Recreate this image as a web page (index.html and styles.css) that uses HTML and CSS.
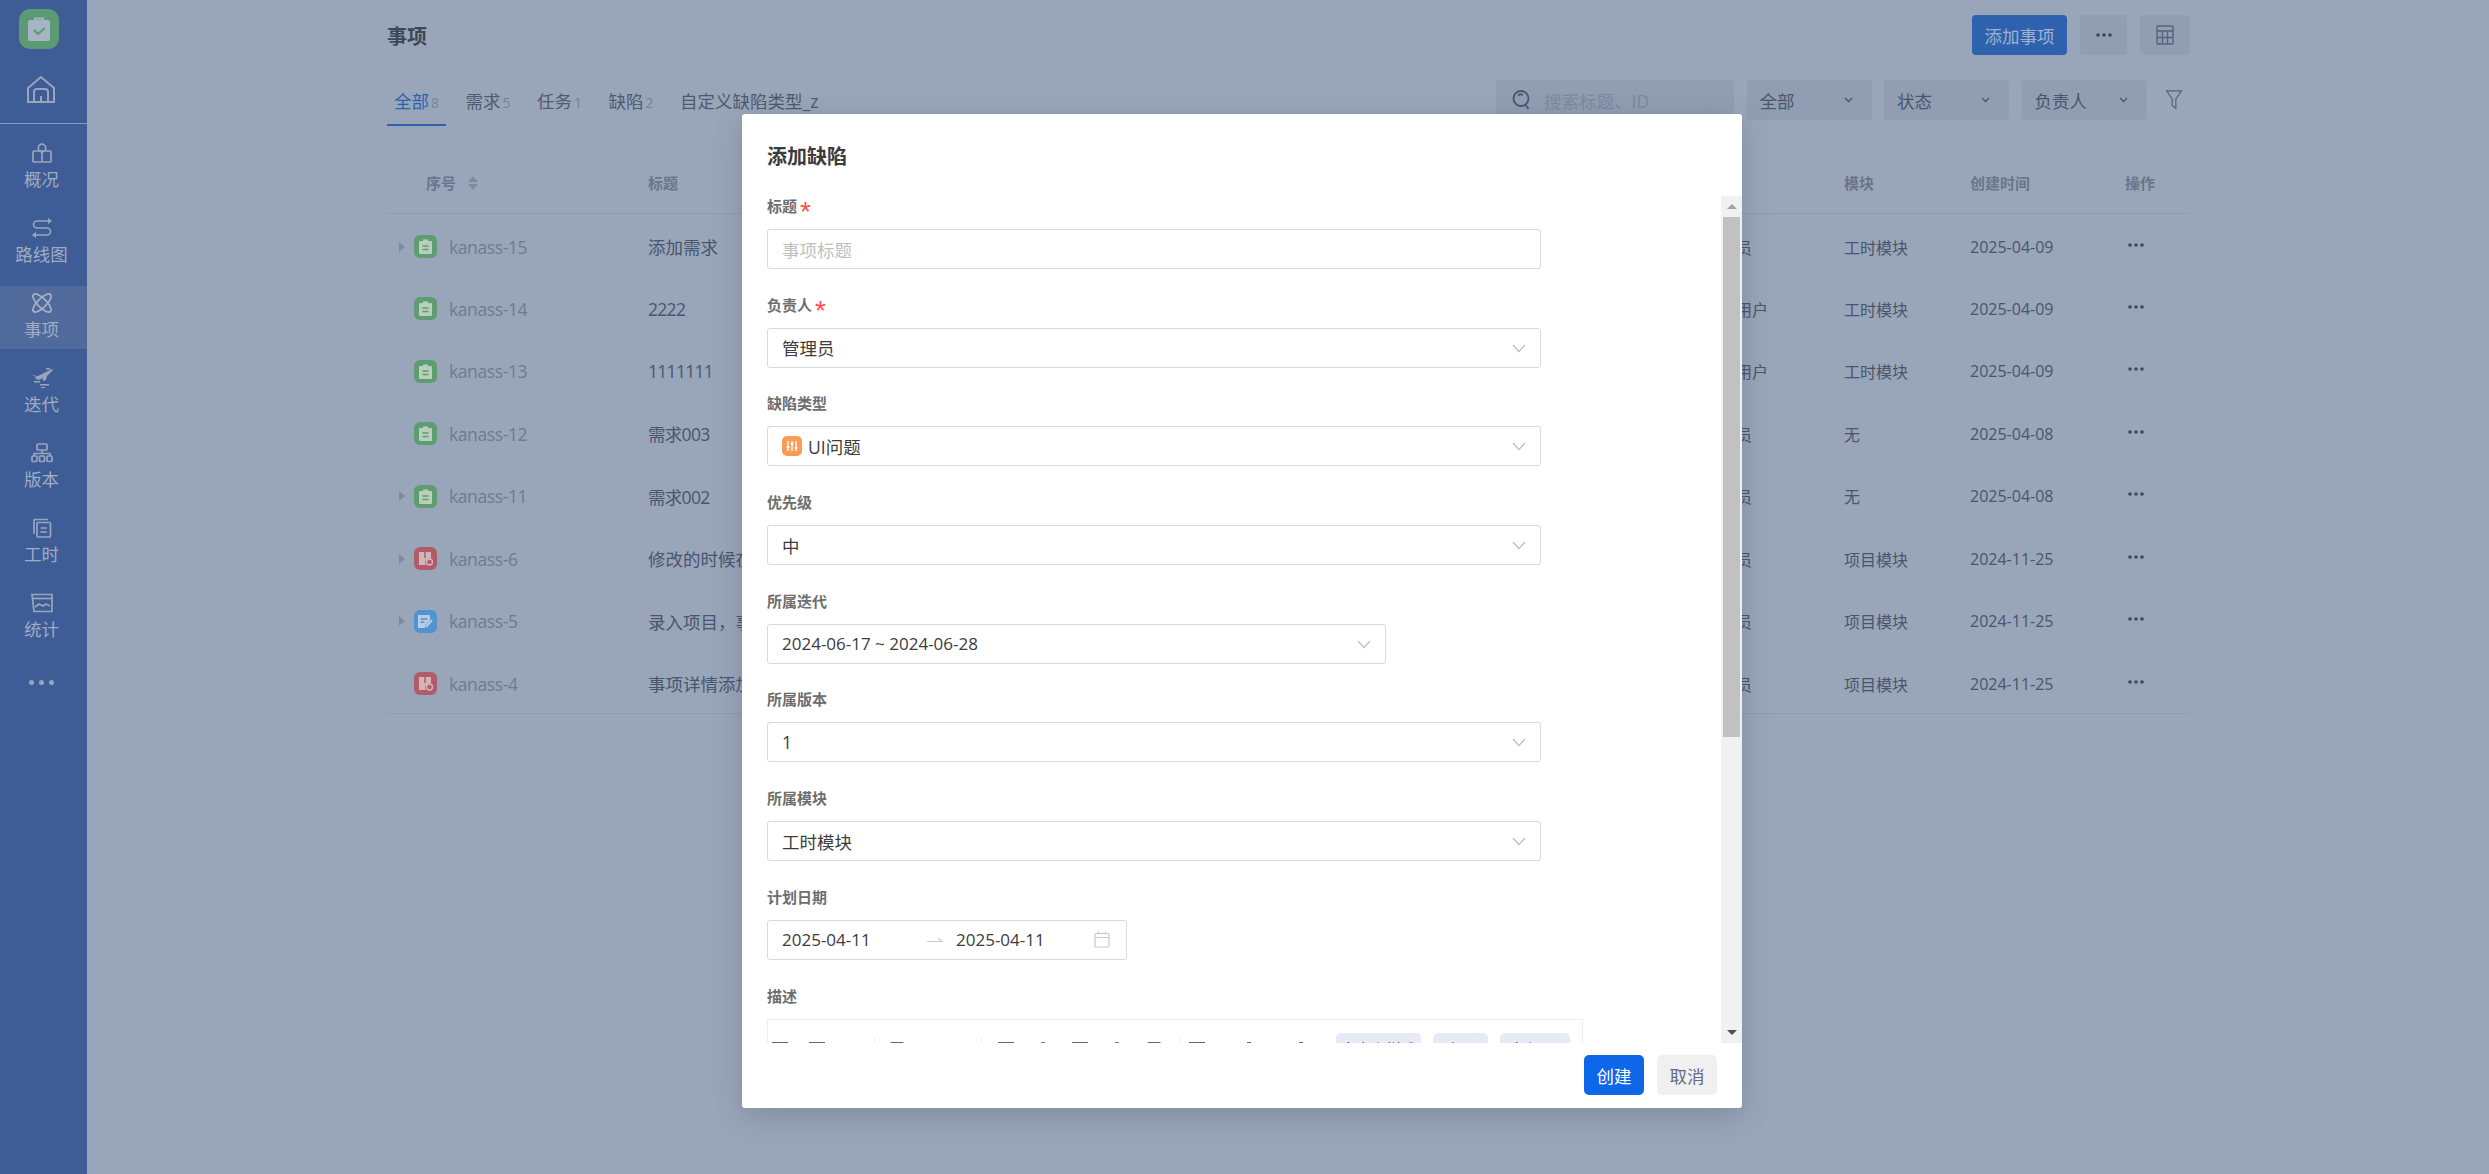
FILE: index.html
```html
<!DOCTYPE html>
<html lang="zh-CN">
<head>
    <title>事项</title>
    <meta charset="utf-8">
    <link rel="stylesheet" href="styles.css">
</head>
<body>
    <div class="app">
        <aside class="sidebar">
            <div class="side-head">
                <div class="logo">
                    <svg width="24" height="26" viewBox="0 0 24 26"><rect x="1" y="4" width="22" height="21" rx="2" fill="#a6b4c4"/><path d="M8 5V2.500h8V5" fill="none" stroke="#a6b4c4" stroke-width="2"/><path d="M7 14l4 4 7-6" fill="none" stroke="#5b9a72" stroke-width="2.200"/></svg>
                </div>
                <svg class="home" width="28" height="29" viewBox="0 0 28 29" fill="none" stroke="#98a6bd" stroke-width="2"><path d="M1 13L14 2l13 11v14H1z"/><path d="M7 27V17a3 3 0 0 1 3-3h8a3 3 0 0 1 3 3v10"/><path d="M14 21v6"/></svg>
            </div>
            <nav class="nav">
                <a class="nav-item">
                    <svg width="20" height="20" viewBox="0 0 20 20" fill="none" stroke="#98a6bd" stroke-width="1.700"><circle cx="10" cy="5" r="3.800"/><rect x="1" y="8" width="18" height="11" rx="1"/><path d="M10 8v11"/></svg>
                    <span>概况</span>
                </a>
                <a class="nav-item">
                    <svg width="22" height="20" viewBox="0 0 22 20" fill="none" stroke="#98a6bd" stroke-width="1.700"><path d="M20 3H6a3.500 3.500 0 0 0 0 7h10a3.500 3.500 0 0 1 0 7H2"/><path d="M17 .5L20.500 3 17 5.500M5 14.500L1.500 17 5 19.500" fill="#98a6bd" stroke-width="1"/></svg>
                    <span>路线图</span>
                </a>
                <a class="nav-item active">
                    <svg width="20" height="20" viewBox="0 0 20 20" fill="none" stroke="#a3b0c4" stroke-width="1.800"><ellipse cx="10" cy="10" rx="12" ry="4.500" transform="rotate(45 10 10)"/><ellipse cx="10" cy="10" rx="12" ry="4.500" transform="rotate(-45 10 10)"/></svg>
                    <span>事项</span>
                </a>
                <a class="nav-item">
                    <svg width="22" height="20" viewBox="0 0 22 20" fill="#98a6bd"><path d="M0 7l7 1 8-4 6-3c1 0 1 1 0 2l-5 5-1 4-3 1 0-3-4 2-5-2 3-1z"/><path d="M15 0h4v1.500h-4zM3 13h6v1.500H3zM9 16h9v1.500H9zM10 19h4v1h-4z"/></svg>
                    <span>迭代</span>
                </a>
                <a class="nav-item">
                    <svg width="22" height="20" viewBox="0 0 22 20" fill="none" stroke="#98a6bd" stroke-width="1.700"><rect x="6" y="1" width="10" height="6" rx="1"/><path d="M11 7v3M3 13v-2.500h16V13"/><rect x="1" y="13" width="5" height="5.500" rx="1"/><rect x="8.500" y="13" width="5" height="5.500" rx="1"/><rect x="16" y="13" width="5" height="5.500" rx="1"/></svg>
                    <span>版本</span>
                </a>
                <a class="nav-item">
                    <svg width="20" height="20" viewBox="0 0 20 20" fill="none" stroke="#98a6bd" stroke-width="1.700"><path d="M2 16V2.500a1 1 0 0 1 1-1h13"/><rect x="5" y="4.500" width="13.500" height="14.500" rx="1"/><path d="M8.500 10h6.500M8.500 14h6.500"/></svg>
                    <span>工时</span>
                </a>
                <a class="nav-item">
                    <svg width="22" height="20" viewBox="0 0 22 20" fill="none" stroke="#98a6bd" stroke-width="1.700"><path d="M1 1.500h20v17H3z"/><path d="M2 5.500h19"/><path d="M4 14l4-3 4 2 3-2 4 2"/></svg>
                    <span>统计</span>
                </a>
            </nav>
            <div class="side-more"><i></i><i></i><i></i></div>
        </aside>

        <main class="page">
            <div class="top">
                <h1>事项</h1>
                <div class="top-btns">
                    <button class="btn-add">添加事项</button>
                    <button class="btn-more"><svg width="16" height="4" viewBox="0 0 16 4"><circle cx="2" cy="2" r="1.800"/><circle cx="8" cy="2" r="1.800"/><circle cx="14" cy="2" r="1.800"/></svg></button>
                    <button class="btn-view"><svg width="18" height="20" viewBox="0 0 18 20" fill="none" stroke="#56637f" stroke-width="1.400"><rect x="1" y="1" width="16" height="18" rx="1"/><path d="M1 6h16M1 12.500h16M6.500 6v13M11.500 6v13"/></svg></button>
                </div>
            </div>

            <div class="bar">
                <div class="tabs">
                    <div class="tab active">全部<em>8</em></div>
                    <div class="tab">需求<em>5</em></div>
                    <div class="tab">任务<em>1</em></div>
                    <div class="tab">缺陷<em>2</em></div>
                    <div class="tab">自定义缺陷类型_z</div>
                </div>
                <div class="filters">
                    <div class="search">
                        <svg width="20" height="22" viewBox="0 0 20 22" fill="none" stroke="#48556d" stroke-width="1.800"><circle cx="10" cy="9.500" r="7.500"/><path d="M14.500 16l3 4M7 6.500c1-1 3-1.500 5-.5"/></svg>
                        <span>搜索标题、ID</span>
                    </div>
                    <div class="filter">全部<svg class="chev" width="9" height="6" viewBox="0 0 9 6"><path d="M1 1l3.500 3.500L8 1"/></svg></div>
                    <div class="filter">状态<svg class="chev" width="9" height="6" viewBox="0 0 9 6"><path d="M1 1l3.500 3.500L8 1"/></svg></div>
                    <div class="filter">负责人<svg class="chev" width="9" height="6" viewBox="0 0 9 6"><path d="M1 1l3.500 3.500L8 1"/></svg></div>
                    <svg class="funnel" width="18" height="22" viewBox="0 0 18 24" fill="none" stroke="#56637a" stroke-width="1.300"><path d="M1 2h16l-6 9v10l-4-3v-7z"/></svg>
                </div>
            </div>

            <table class="list">
                <colgroup>
                    <col class="c-id"><col class="c-title"><col class="c-user"><col class="c-mod"><col class="c-date"><col class="c-op">
                </colgroup>
                <thead>
                    <tr>
                        <th><div class="th-id">序号<span class="sorter"><i></i><i></i></span></div></th>
                        <th>标题</th>
                        <th><span class="th-user">负责人</span></th>
                        <th>模块</th>
                        <th>创建时间</th>
                        <th>操作</th>
                    </tr>
                </thead>
                <tbody>
                    <tr>
                        <td><div class="cell-id"><span class="expand"></span><span class="ico green"><svg width="13" height="15" viewBox="0 0 13 15"><path d="M1 2h3V.5h5V2h3a1 1 0 0 1 1 1v11a1 1 0 0 1-1 1H1a1 1 0 0 1-1-1V3a1 1 0 0 1 1-1z" fill="#b9cfbb"/><path d="M3.500 7h6M3.500 10.500h6" stroke="#5e9c71" stroke-width="1.500"/></svg></span>kanass-15</div></td>
                        <td class="name">添加需求</td><td>管理员</td><td>工时模块</td><td>2025-04-09</td>
                        <td><svg class="dots" width="16" height="4" viewBox="0 0 16 4"><circle cx="2" cy="2" r="1.800"/><circle cx="8" cy="2" r="1.800"/><circle cx="14" cy="2" r="1.800"/></svg></td>
                    </tr>
                    <tr>
                        <td><div class="cell-id"><span class="no-expand"></span><span class="ico green"><svg width="13" height="15" viewBox="0 0 13 15"><path d="M1 2h3V.5h5V2h3a1 1 0 0 1 1 1v11a1 1 0 0 1-1 1H1a1 1 0 0 1-1-1V3a1 1 0 0 1 1-1z" fill="#b9cfbb"/><path d="M3.500 7h6M3.500 10.500h6" stroke="#5e9c71" stroke-width="1.500"/></svg></span>kanass-14</div></td>
                        <td class="name tight">2222</td><td>普通用户</td><td>工时模块</td><td>2025-04-09</td>
                        <td><svg class="dots" width="16" height="4" viewBox="0 0 16 4"><circle cx="2" cy="2" r="1.800"/><circle cx="8" cy="2" r="1.800"/><circle cx="14" cy="2" r="1.800"/></svg></td>
                    </tr>
                    <tr>
                        <td><div class="cell-id"><span class="no-expand"></span><span class="ico green"><svg width="13" height="15" viewBox="0 0 13 15"><path d="M1 2h3V.5h5V2h3a1 1 0 0 1 1 1v11a1 1 0 0 1-1 1H1a1 1 0 0 1-1-1V3a1 1 0 0 1 1-1z" fill="#b9cfbb"/><path d="M3.500 7h6M3.500 10.500h6" stroke="#5e9c71" stroke-width="1.500"/></svg></span>kanass-13</div></td>
                        <td class="name tight">1111111</td><td>普通用户</td><td>工时模块</td><td>2025-04-09</td>
                        <td><svg class="dots" width="16" height="4" viewBox="0 0 16 4"><circle cx="2" cy="2" r="1.800"/><circle cx="8" cy="2" r="1.800"/><circle cx="14" cy="2" r="1.800"/></svg></td>
                    </tr>
                    <tr>
                        <td><div class="cell-id"><span class="no-expand"></span><span class="ico green"><svg width="13" height="15" viewBox="0 0 13 15"><path d="M1 2h3V.5h5V2h3a1 1 0 0 1 1 1v11a1 1 0 0 1-1 1H1a1 1 0 0 1-1-1V3a1 1 0 0 1 1-1z" fill="#b9cfbb"/><path d="M3.500 7h6M3.500 10.500h6" stroke="#5e9c71" stroke-width="1.500"/></svg></span>kanass-12</div></td>
                        <td class="name tight">需求003</td><td>管理员</td><td>无</td><td>2025-04-08</td>
                        <td><svg class="dots" width="16" height="4" viewBox="0 0 16 4"><circle cx="2" cy="2" r="1.800"/><circle cx="8" cy="2" r="1.800"/><circle cx="14" cy="2" r="1.800"/></svg></td>
                    </tr>
                    <tr>
                        <td><div class="cell-id"><span class="expand"></span><span class="ico green"><svg width="13" height="15" viewBox="0 0 13 15"><path d="M1 2h3V.5h5V2h3a1 1 0 0 1 1 1v11a1 1 0 0 1-1 1H1a1 1 0 0 1-1-1V3a1 1 0 0 1 1-1z" fill="#b9cfbb"/><path d="M3.500 7h6M3.500 10.500h6" stroke="#5e9c71" stroke-width="1.500"/></svg></span>kanass-11</div></td>
                        <td class="name tight">需求002</td><td>管理员</td><td>无</td><td>2025-04-08</td>
                        <td><svg class="dots" width="16" height="4" viewBox="0 0 16 4"><circle cx="2" cy="2" r="1.800"/><circle cx="8" cy="2" r="1.800"/><circle cx="14" cy="2" r="1.800"/></svg></td>
                    </tr>
                    <tr>
                        <td><div class="cell-id"><span class="expand"></span><span class="ico red"><svg width="14" height="15" viewBox="0 0 14 15"><path d="M0 1h12v7a4 4 0 0 0-5 6H0z" fill="#d4b4bb"/><path d="M6 1v6" stroke="#b05c68" stroke-width="1.500"/><circle cx="10.500" cy="11" r="3" fill="none" stroke="#d4b4bb" stroke-width="1.500"/></svg></span>kanass-6</div></td>
                        <td class="name">修改的时候在</td><td>管理员</td><td>项目模块</td><td>2024-11-25</td>
                        <td><svg class="dots" width="16" height="4" viewBox="0 0 16 4"><circle cx="2" cy="2" r="1.800"/><circle cx="8" cy="2" r="1.800"/><circle cx="14" cy="2" r="1.800"/></svg></td>
                    </tr>
                    <tr>
                        <td><div class="cell-id"><span class="expand"></span><span class="ico blue"><svg width="15" height="15" viewBox="0 0 15 15"><path d="M0 1h12v5l-5 6v2H0z" fill="#b6cde4"/><path d="M2.500 5h7M2.500 8h4" stroke="#4f93cf" stroke-width="1.300"/><path d="M8 13l6-7" stroke="#b6cde4" stroke-width="2"/></svg></span>kanass-5</div></td>
                        <td class="name">录入项目，事</td><td>管理员</td><td>项目模块</td><td>2024-11-25</td>
                        <td><svg class="dots" width="16" height="4" viewBox="0 0 16 4"><circle cx="2" cy="2" r="1.800"/><circle cx="8" cy="2" r="1.800"/><circle cx="14" cy="2" r="1.800"/></svg></td>
                    </tr>
                    <tr>
                        <td><div class="cell-id"><span class="no-expand"></span><span class="ico red"><svg width="14" height="15" viewBox="0 0 14 15"><path d="M0 1h12v7a4 4 0 0 0-5 6H0z" fill="#d4b4bb"/><path d="M6 1v6" stroke="#b05c68" stroke-width="1.500"/><circle cx="10.500" cy="11" r="3" fill="none" stroke="#d4b4bb" stroke-width="1.500"/></svg></span>kanass-4</div></td>
                        <td class="name">事项详情添加</td><td>管理员</td><td>项目模块</td><td>2024-11-25</td>
                        <td><svg class="dots" width="16" height="4" viewBox="0 0 16 4"><circle cx="2" cy="2" r="1.800"/><circle cx="8" cy="2" r="1.800"/><circle cx="14" cy="2" r="1.800"/></svg></td>
                    </tr>
                </tbody>
            </table>
        </main>
    </div>

    <div class="modal">
        <div class="modal-head">添加缺陷</div>
        <div class="modal-body">
            <div class="form">
                <div class="field">
                    <label>标题<b>*</b></label>
                    <div class="input placeholder">事项标题</div>
                </div>
                <div class="field">
                    <label>负责人<b>*</b></label>
                    <div class="input">管理员<svg class="arrow" width="14" height="9" viewBox="0 0 14 9"><path d="M1 1l6 6.500L13 1"/></svg></div>
                </div>
                <div class="field">
                    <label>缺陷类型</label>
                    <div class="input">
                        <span class="type-ico"><svg width="12" height="12" viewBox="0 0 12 12" stroke="#fff" stroke-width="1.400"><path d="M2 1v10M6 1v10M10 1v10"/><path d="M.5 7h3M4.500 4h3M8.500 8h3" stroke-width="1.600"/></svg></span>UI问题
                        <svg class="arrow" width="14" height="9" viewBox="0 0 14 9"><path d="M1 1l6 6.500L13 1"/></svg>
                    </div>
                </div>
                <div class="field">
                    <label>优先级</label>
                    <div class="input">中<svg class="arrow" width="14" height="9" viewBox="0 0 14 9"><path d="M1 1l6 6.500L13 1"/></svg></div>
                </div>
                <div class="field">
                    <label>所属迭代</label>
                    <div class="input mid date-text">2024-06-17 ~ 2024-06-28<svg class="arrow" width="14" height="9" viewBox="0 0 14 9"><path d="M1 1l6 6.500L13 1"/></svg></div>
                </div>
                <div class="field">
                    <label>所属版本</label>
                    <div class="input">1<svg class="arrow" width="14" height="9" viewBox="0 0 14 9"><path d="M1 1l6 6.500L13 1"/></svg></div>
                </div>
                <div class="field">
                    <label>所属模块</label>
                    <div class="input">工时模块<svg class="arrow" width="14" height="9" viewBox="0 0 14 9"><path d="M1 1l6 6.500L13 1"/></svg></div>
                </div>
                <div class="field">
                    <label>计划日期</label>
                    <div class="input range date-text">
                        <span class="range-from">2025-04-11</span>
                        <svg class="range-sep" width="16" height="7" viewBox="0 0 16 7" fill="none" stroke="#ccc" stroke-width="1.200"><path d="M0 5.500h15L11 2"/></svg>
                        <span class="range-to">2025-04-11</span>
                        <svg class="calendar" width="16" height="17" viewBox="0 0 16 17" fill="none" stroke="#c8c8c8" stroke-width="1.200"><rect x="1" y="2.500" width="14" height="13.500" rx="1"/><path d="M1 6.500h14M4.500 .5v3M11.500 .5v3"/></svg>
                    </div>
                </div>
                <div class="field">
                    <label>描述</label>
                    <div class="editor">
                        <div class="editor-bar">
                            <div class="tool-group first">
                                <span class="tool line"></span><span class="tool line"></span>
                            </div>
                            <div class="tool-group second">
                                <span class="tool box"></span>
                            </div>
                            <div class="tool-group third">
                                <span class="tool line"></span><span class="tool round"></span><span class="tool line thick"></span><span class="tool round"></span><span class="tool box"></span>
                            </div>
                            <div class="tool-group fourth">
                                <span class="tool line"></span><span class="tool tick"></span><span class="tool tick"></span>
                            </div>
                            <span class="tool-text large">自定义样式</span>
                            <span class="tool-text small">大号</span>
                            <span class="tool-text medium">行间距</span>
                        </div>
                    </div>
                </div>
            </div>
            <div class="scrollbar">
                <span class="sb-btn"><i class="sb-up"></i></span>
                <div class="sb-track"><div class="sb-thumb"></div></div>
                <span class="sb-btn"><i class="sb-down"></i></span>
            </div>
        </div>
        <div class="modal-foot">
            <button class="btn-ok">创建</button>
            <button class="btn-cancel">取消</button>
        </div>
    </div>
</body>
</html>
```

FILE: styles.css
```css
* {
    box-sizing: border-box;
}

html, body {
    height: 100%;
    margin: 0;
    overflow: hidden;
}

body {
    background-color: #99a6b9;
    color: #48556d;
    font-family: "Open Sans", "Noto Sans CJK SC", sans-serif;
    font-size: 17.5px;
}

button {
    border: none;
    font: inherit;
    cursor: pointer;
}

.app {
    display: flex;
    height: 100%;
}

/* left menu */
.sidebar {
    width: 87px;
    flex-shrink: 0;
    background-color: #3e5c96;
    color: #9fadc4;
}

.side-head {
    height: 124px;
    padding-top: 9px;
    border-bottom: 1px solid #8c9dba;
}

.logo {
    width: 40px;
    height: 40px;
    margin-left: 19px;
    border-radius: 11px;
    background-color: #5b9a72;
    display: flex;
    align-items: center;
    justify-content: center;
}

.home {
    display: block;
    margin: 26px 0 0 27px;
}

.nav {
    margin-top: 12px;
}

.nav-item {
    height: 63px;
    margin-bottom: 12px;
    padding: 7px 4px 0 0;
    display: flex;
    flex-direction: column;
    align-items: center;
    gap: 4px;
}

.nav-item span {
    line-height: 24px;
}

.nav-item.active {
    background-color: #4f6a9b;
}

.side-more {
    margin-top: 31px;
    padding-right: 4px;
    display: flex;
    justify-content: center;
    gap: 5px;
}

.side-more i {
    width: 5px;
    height: 5px;
    border-radius: 50%;
    background-color: #98a6bd;
}

/* page */
.page {
    flex: 1;
    padding: 15px 299px 0 300px;
}

.top {
    display: flex;
    justify-content: space-between;
    align-items: center;
    height: 40px;
    margin-bottom: 25px;
}

.top h1 {
    margin: 0;
    font-size: 20px;
    font-weight: 700;
    color: #3d4758;
}

.top-btns {
    display: flex;
    gap: 13px;
}

.top-btns button {
    height: 40px;
    border-radius: 4px;
    background-color: #919eb2;
    display: flex;
    align-items: center;
    justify-content: center;
}

.top-btns .btn-add {
    width: 95px;
    background-color: #2f62ae;
    color: #9eb2d2;
}

.btn-more {
    width: 47px;
    fill: #3d4758;
}

.btn-view {
    width: 50px;
}

.bar {
    display: flex;
    justify-content: space-between;
    height: 46px;
    margin-bottom: 27px;
}

.tabs {
    display: flex;
    gap: 12.5px;
}

.tab {
    height: 46px;
    padding: 0 7px;
    line-height: 42px;
    color: #4e5a70;
    border-bottom: 2px solid transparent;
}

.tab em {
    margin-left: 2px;
    font-style: normal;
    font-size: 14px;
    color: #77839a;
}

.tab.active {
    color: #2f62ae;
    border-bottom-color: #2f62ae;
}

.filters {
    display: flex;
    gap: 12.5px;
    height: 40px;
    align-items: center;
}

.search, .filter {
    height: 40px;
    border-radius: 4px;
    background-color: #919eb2;
    display: flex;
    align-items: center;
}

.search {
    width: 238px;
    padding-left: 15px;
    gap: 13px;
    color: #7d899e;
}

.filter {
    width: 125px;
    padding: 0 19px 0 13px;
    justify-content: space-between;
    color: #48556d;
}

.chev {
    fill: none;
    stroke: #48556d;
    stroke-width: 1.300;
}

.funnel {
    margin-left: 6px;
    margin-right: 7px;
}

/* table */
.list {
    width: 1802px;
    table-layout: fixed;
    border-collapse: collapse;
    font-size: 16px;
}

.c-id { width: 261px; }
.c-title { width: 1056px; }
.c-user { width: 140px; }
.c-mod { width: 126px; }
.c-date { width: 155px; }
.c-op { width: 64px; }

.list th {
    height: 60px;
    padding: 0;
    text-align: left;
    font-size: 15px;
    font-weight: 700;
    color: #69758b;
    border-bottom: 1px solid #8f9cb0;
}

.th-id {
    padding-left: 39px;
    display: flex;
    align-items: center;
    gap: 12px;
}

.th-user {
    margin-left: -12px;
}

.sorter i {
    display: block;
    width: 0;
    height: 0;
    border-left: 5px solid transparent;
    border-right: 5px solid transparent;
}

.sorter i:first-child {
    border-bottom: 6px solid #7e8a9e;
    margin-bottom: 2px;
}

.sorter i:last-child {
    border-top: 6px solid #7e8a9e;
}

.list td {
    height: 62.5px;
    padding: 4px 0 0;
}

.list tbody tr:last-child td {
    border-bottom: 1px solid #8f9cb0;
}

.list td.name {
    font-size: 17.5px;
}

.list td.tight {
    letter-spacing: -0.7px;
}

.cell-id {
    display: flex;
    align-items: center;
    color: #6f7a90;
    font-size: 17.5px;
    letter-spacing: -0.4px;
}

.expand, .no-expand {
    width: 6px;
    height: 10px;
    margin-left: 12px;
    margin-right: 9px;
}

.expand {
    border-left: 6px solid #7e8a9e;
    border-top: 5px solid transparent;
    border-bottom: 5px solid transparent;
}

.ico {
    width: 23px;
    height: 23px;
    margin-right: 12px;
    border-radius: 6px;
    display: flex;
    align-items: center;
    justify-content: center;
}

.green { background-color: #5e9c71; }
.red { background-color: #b05c68; }
.blue { background-color: #4f93cf; }

.dots {
    display: block;
    margin: -4px 0 0 3px;
    fill: #3d4758;
}

/* add dialog */
.modal {
    position: absolute;
    left: 742px;
    top: 114px;
    width: 1000px;
    height: 994px;
    border-radius: 3px;
    background-color: #fff;
    box-shadow: 0 8px 30px rgba(40, 50, 70, 0.22);
    color: #3c3c3c;
    display: flex;
    flex-direction: column;
}

.modal-head {
    height: 82px;
    padding: 30px 25px 0;
    font-size: 20px;
    font-weight: 700;
    line-height: 26px;
}

.modal-body {
    height: 847px;
    display: flex;
}

.form {
    flex: 1;
    padding-left: 25px;
    overflow: hidden;
}

/* drawn by hand, the browser hides its own when photographed */
.scrollbar {
    width: 21px;
    display: flex;
    flex-direction: column;
    background-color: #f1f1f1;
}

.sb-btn {
    height: 21px;
    display: flex;
    align-items: center;
    justify-content: center;
}

.sb-up, .sb-down {
    width: 0;
    height: 0;
    border-left: 5px solid transparent;
    border-right: 5px solid transparent;
}

.sb-up {
    border-bottom: 5px solid #a3a3a3;
}

.sb-down {
    border-top: 5px solid #505050;
}

.sb-track {
    flex: 1;
    padding: 0 2px;
}

.sb-thumb {
    height: 520px;
    background-color: #c1c1c1;
}

.field {
    margin-bottom: 25.7px;
}

.field label {
    display: block;
    height: 22px;
    margin-bottom: 11px;
    font-size: 15px;
    font-weight: 700;
    line-height: 21px;
    color: #6e6e6e;
}

.field label b {
    margin-left: 3px;
    color: #ff4d4f;
    font-family: "Liberation Sans", sans-serif;
    font-size: 28px;
    font-weight: 400;
    line-height: 0;
    vertical-align: -9px;
}

.input {
    position: relative;
    width: 774px;
    height: 40px;
    padding-left: 14px;
    border: 1px solid #d9d9d9;
    border-radius: 3px;
    display: flex;
    align-items: center;
}

.input.mid {
    width: 619px;
}

.date-text {
    font-size: 17px;
}

.placeholder {
    color: #bfbfbf;
}

.arrow {
    position: absolute;
    right: 14px;
    top: 15px;
    fill: none;
    stroke: #bfbfbf;
    stroke-width: 1.300;
}

.type-ico {
    width: 20px;
    height: 20px;
    margin-right: 6px;
    border-radius: 5px;
    background-color: #ff9a56;
    display: flex;
    align-items: center;
    justify-content: center;
}

.input.range {
    width: 360px;
}

.range-from {
    width: 143px;
    flex-shrink: 0;
}

.range-sep {
    width: 18px;
    flex-shrink: 0;
    margin-left: 1px;
}

.range-to {
    width: 100px;
    flex-shrink: 0;
    margin-left: 12px;
}

.calendar {
    flex-shrink: 0;
    margin-left: 38px;
}

/* the editor runs below the fold of the dialog */
.editor {
    width: 816px;
    height: 489px;
    border: 1px solid #eee;
}

.editor-bar {
    display: flex;
    align-items: flex-start;
    padding-top: 13px;
}

.tool-group {
    display: flex;
    gap: 13px;
    height: 40px;
    border-right: 1px solid #eee;
    margin-top: 4px;
}

.tool-group.first { width: 107px; }
.tool-group.second { width: 107px; padding-left: 10px; }
.tool-group.third { width: 198px; padding-left: 12px; }
.tool-group.fourth {
    width: 156px;
    padding-left: 5px;
    gap: 28px;
    border-right: none;
}

.tool {
    width: 24px;
    height: 16px;
    margin-top: 5px;
    position: relative;
}

.tool::before {
    content: "";
    position: absolute;
    left: 4px;
    right: 4px;
    top: 0;
    height: 12px;
    border-top: 1.500px solid #666;
}

.tool.box::before {
    border: 1.500px solid #666;
    border-radius: 3px;
}

.tool.round::before {
    left: 7px;
    right: 7px;
    border: 1.500px solid #666;
    border-radius: 50%;
}

.tool.thick::before {
    border-top-width: 3px;
}

.tool.tick::before {
    left: 10px;
    right: 10px;
    border-top: 2px solid #666;
}

.tool-text {
    height: 32px;
    margin-right: 12px;
    padding-top: 5px;
    border-radius: 5px;
    background-color: #e7ebf5;
    font-size: 15px;
    text-align: center;
}

.tool-text.large { width: 85px; }
.tool-text.small { width: 55px; }
.tool-text.medium { width: 70px; margin-right: 0; }

.modal-foot {
    height: 65px;
    padding: 12px 25px 0 0;
    display: flex;
    justify-content: flex-end;
    gap: 13px;
}

.modal-foot button {
    width: 60px;
    height: 40px;
    border-radius: 5px;
}

.btn-ok {
    background-color: #0d67e8;
    color: #fff;
}

.btn-cancel {
    background-color: #f0f0f0;
    color: #5f6b82;
}
```
